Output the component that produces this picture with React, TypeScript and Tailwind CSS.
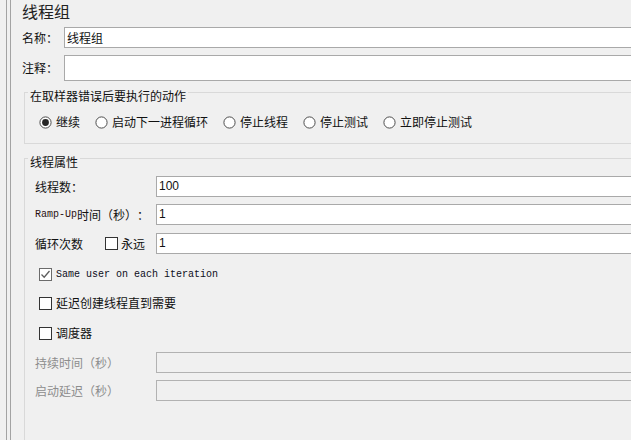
import React from 'react'

const cjk = "font-['Noto_Sans_CJK_SC','Noto_Sans',sans-serif]"
const mono = "font-['Liberation_Mono',monospace]"

function Radio({ checked, label }: { checked?: boolean; label: string }) {
  return (
    <label className="flex items-center gap-[4px] shrink-0">
      <svg width="13" height="13" viewBox="0 0 13 13">
        <circle cx="6.5" cy="6.5" r="5.6" fill="#fff" stroke="#4d4d4d" strokeWidth="1" />
        {checked && <circle cx="6.5" cy="6.5" r="3.4" fill="#262626" />}
      </svg>
      <span>{label}</span>
    </label>
  )
}

function Check({ checked }: { checked?: boolean }) {
  return (
    <svg width="13" height="13" viewBox="0 0 13 13" className="shrink-0">
      <rect x="0.5" y="0.5" width="12" height="12" fill="#fff" stroke={checked ? '#6b6b6b' : '#333'} />
      {checked && <path d="M2.5 6.5 L5.2 9.2 L10.5 3" fill="none" stroke="#5c5c5c" strokeWidth="1.3" />}
    </svg>
  )
}

function Field({ value, disabled }: { value?: string; disabled?: boolean }) {
  return (
    <div
      className={`flex-1 h-[21px] border pl-[2px] leading-[19px] font-['Liberation_Sans',sans-serif] ${
        disabled ? 'bg-[#f0f0f0] border-[#b2b2b2]' : 'bg-white border-[#a9a9a9]'
      }`}
    >
      {value}
    </div>
  )
}

export default function App() {
  return (
    <div className={`w-[631px] h-[440px] overflow-hidden bg-[#f0f0f0] flex text-[12px] text-[#111] [text-spacing-trim:space-all] ${cjk}`}>
      {/* split pane edge */}
      <div className="ml-[6px] w-[5px] shrink-0 border-x border-[#a3a3a3]" />

      <div className="w-[640px] shrink-0 pl-[11px] flex flex-col">
        <div className="h-[22px] leading-[22px] text-[16px] text-[#222]">线程组</div>

        <div className="flex items-center mt-[5px] h-[21px]">
          <span className="w-[42px] shrink-0">名称：</span>
          <div className="flex-1 h-[21px] bg-white border border-[#a9a9a9] pl-[2px] leading-[19px]">线程组</div>
        </div>
        <div className="flex items-center mt-[7px] h-[26px]">
          <span className="w-[42px] shrink-0">注释：</span>
          <div className="flex-1 h-[26px] bg-white border border-[#a9a9a9]" />
        </div>

        {/* sampler error action */}
        <div className="ml-[2px] mt-[11px] border border-[#d9d9d9] pb-[12px]">
          <div className="-mt-[5px] h-[16px] leading-[16px]">
            <span className="inline-block ml-[3px] px-[2px] bg-[#f0f0f0]">在取样器错误后要执行的动作</span>
          </div>
          <div className="mt-[9px] h-[18px] flex items-center gap-[15px] pl-[14px]">
            <Radio checked label="继续" />
            <Radio label="启动下一进程循环" />
            <Radio label="停止线程" />
            <Radio label="停止测试" />
            <Radio label="立即停止测试" />
          </div>
        </div>

        {/* thread properties */}
        <div className="ml-[2px] mt-[14px] flex-1 border-l border-t border-[#d9d9d9]">
          <div className="-mt-[5px] h-[16px] leading-[16px]">
            <span className="inline-block ml-[3px] px-[2px] bg-[#f0f0f0]">线程属性</span>
          </div>

          <div className="pl-[10px] flex flex-col">
            <div className="flex items-center mt-[6px] h-[21px]">
              <span className="w-[121px] shrink-0">线程数：</span>
              <Field value="100" />
            </div>
            <div className="flex items-center mt-[7px] h-[21px]">
              <span className="w-[121px] shrink-0 flex items-center">
                <span className={`${mono} text-[10px] text-[#2a1010]`}>Ramp-Up</span>
                <span>时间（秒）：</span>
              </span>
              <Field value="1" />
            </div>
            <div className="flex items-center mt-[8px] h-[21px]">
              <span className="w-[121px] shrink-0 flex items-center">
                <span className="w-[70px]">循环次数</span>
                <Check />
                <span className="ml-[3px]">永远</span>
              </span>
              <Field value="1" />
            </div>

            <div className="flex items-center mt-[11px] h-[18px] pl-[4px] gap-[4px]">
              <Check checked />
              <span className={`${mono} text-[10px] text-[#0d0d1a]`}>Same user on each iteration</span>
            </div>
            <div className="flex items-center mt-[11px] h-[18px] pl-[4px] gap-[4px]">
              <Check />
              <span>延迟创建线程直到需要</span>
            </div>
            <div className="flex items-center mt-[12px] h-[18px] pl-[4px] gap-[4px]">
              <Check />
              <span>调度器</span>
            </div>

            <div className="flex items-center mt-[10px] h-[21px] text-[#8d8d8d]">
              <span className="w-[121px] shrink-0">持续时间（秒）</span>
              <Field disabled />
            </div>
            <div className="flex items-center mt-[7px] h-[21px] text-[#8d8d8d]">
              <span className="w-[121px] shrink-0">启动延迟（秒）</span>
              <Field disabled />
            </div>
          </div>
        </div>
      </div>
    </div>
  )
}
